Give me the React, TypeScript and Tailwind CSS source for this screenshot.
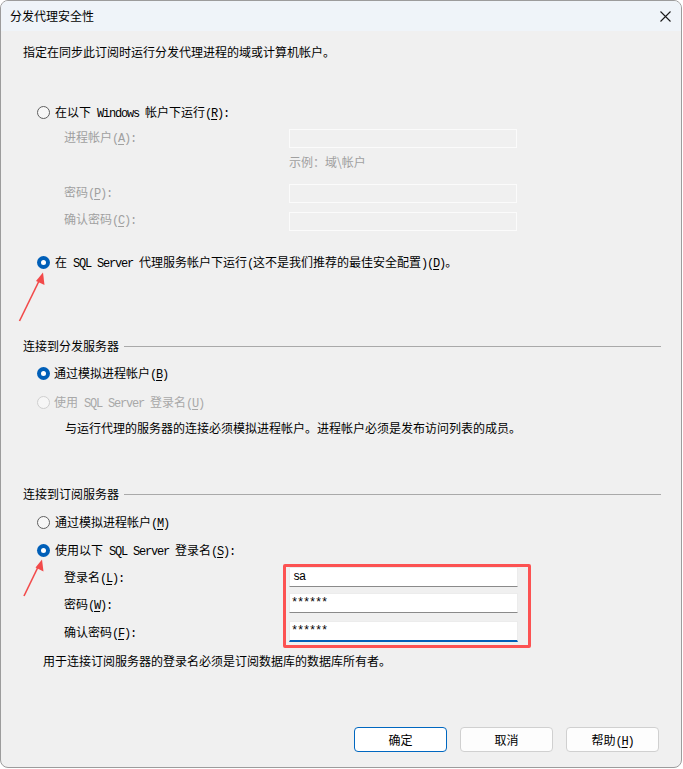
import React from "react";

const CJK = '"Noto Sans CJK SC", "Noto Sans", sans-serif';

function sim(text: string) {
  const parts = text.split(/([\x00-\x7F]+)/).filter((p) => p.length > 0);
  return parts.map((p, i) =>
    /^[\x00-\x7F]+$/.test(p) ? (
      <span
        key={i}
        className="font-['Liberation_Mono',monospace] text-[12px] tracking-[-1.2px] whitespace-pre"
      >
        {p}
      </span>
    ) : (
      <span key={i} className="font-['Noto_Sans_CJK_SC',sans-serif] text-[12px]">
        {p}
      </span>
    )
  );
}

function U({ c }: { c: string }) {
  return (
    <span className="font-['Liberation_Mono',monospace] text-[12px] tracking-[-1.2px] underline underline-offset-[2px]">
      {c}
    </span>
  );
}

function Radio({ state }: { state: "on" | "off" | "disabled" }) {
  if (state === "on")
    return (
      <span className="w-[13px] h-[13px] rounded-full bg-[#005fb8] flex items-center justify-center shrink-0">
        <span className="w-[5px] h-[5px] rounded-full bg-white" />
      </span>
    );
  if (state === "disabled")
    return <span className="w-[13px] h-[13px] rounded-full border border-[#cfcfcf] bg-[#f6f6f6] shrink-0" />;
  return <span className="w-[13px] h-[13px] rounded-full border border-[#5f5f5f] bg-[#f7f7f7] shrink-0" />;
}

function Row({ className, children }: { className: string; children: React.ReactNode }) {
  return <div className={"flex items-center h-[20px] leading-[20px] " + className}>{children}</div>;
}

export default function App() {
  return (
    <div className="w-[683px] h-[769px] bg-white relative" style={{ fontFamily: CJK }}>
      <div className="w-[682px] h-[768px] border border-[#9c9c9c] rounded-[8px] overflow-hidden bg-[#f0f0f0] flex flex-col text-black">
        {/* title bar */}
        <div className="h-[30px] bg-[#eff4f9] flex items-center justify-between pl-[9px] pr-[9px] shrink-0">
          <span className="text-[12px] leading-[20px]">分发代理安全性</span>
          <svg width="11" height="11" viewBox="0 0 11 11" className="mr-[1px]">
            <path d="M0.5 0.5 L10.5 10.5 M10.5 0.5 L0.5 10.5" stroke="#1a1a1a" strokeWidth="1.1" />
          </svg>
        </div>

        <div className="flex flex-col pl-[22px]">
          <Row className="mt-[11px] text-[12px]">指定在同步此订阅时运行分发代理进程的域或计算机帐户。</Row>

          <Row className="mt-[40px] pl-[14px] gap-[5px]">
            <Radio state="off" />
            <span className="whitespace-pre">
              {sim("在以下 Windows 帐户下运行(")}
              <U c="R" />
              {sim("):")}
            </span>
          </Row>

          {/* disabled fields */}
          <div className="mt-[3px] h-[20px] flex items-start text-[#a0a0a0]">
            <span className="w-[266px] pl-[41px] leading-[20px] whitespace-pre">
              {sim("进程帐户(")}
              <U c="A" />
              {sim("):")}
            </span>
            <span className="mt-[4px] w-[228px] h-[19px] border border-[#fbfbfb] shrink-0" />
          </div>
          <Row className="mt-[7px] pl-[266px] text-[12px] text-[#a0a0a0]">示例：域\帐户</Row>
          <div className="mt-[8px] h-[20px] flex items-start text-[#a0a0a0]">
            <span className="w-[266px] pl-[41px] leading-[20px] whitespace-pre">
              {sim("密码(")}
              <U c="P" />
              {sim("):")}
            </span>
            <span className="mt-[4px] w-[228px] h-[19px] border border-[#fbfbfb] shrink-0" />
          </div>
          <div className="mt-[7px] h-[20px] flex items-start text-[#a0a0a0]">
            <span className="w-[266px] pl-[41px] leading-[20px] whitespace-pre">
              {sim("确认密码(")}
              <U c="C" />
              {sim("):")}
            </span>
            <span className="mt-[5px] w-[228px] h-[19px] border border-[#fbfbfb] shrink-0" />
          </div>

          <Row className="mt-[25px] pl-[14px] gap-[5px]">
            <Radio state="on" />
            <span className="whitespace-pre">
              {sim("在 SQL Server 代理服务帐户下运行(这不是我们推荐的最佳安全配置)(")}
              <U c="D" />
              {sim(")。")}
            </span>
          </Row>

          {/* section 1 */}
          <div className="mt-[64px] h-[20px] flex items-center gap-[5px] pr-[20px]">
            <span className="text-[12px] leading-[20px] shrink-0">连接到分发服务器</span>
            <span className="flex-1 h-px bg-[#a9a9a9]" />
          </div>
          <Row className="mt-[7px] pl-[14px] gap-[4px]">
            <Radio state="on" />
            <span className="whitespace-pre">
              {sim("通过模拟进程帐户(")}
              <U c="B" />
              {sim(")")}
            </span>
          </Row>
          <Row className="mt-[9px] pl-[14px] gap-[4px] text-[#a8a8a8]">
            <Radio state="disabled" />
            <span className="whitespace-pre">
              {sim("使用 SQL Server 登录名(")}
              <U c="U" />
              {sim(")")}
            </span>
          </Row>
          <Row className="mt-[6px] pl-[42px] text-[12px]">与运行代理的服务器的连接必须模拟进程帐户。进程帐户必须是发布访问列表的成员。</Row>

          {/* section 2 */}
          <div className="mt-[46px] h-[20px] flex items-center gap-[5px] pr-[20px]">
            <span className="text-[12px] leading-[20px] shrink-0">连接到订阅服务器</span>
            <span className="flex-1 h-px bg-[#a9a9a9]" />
          </div>
          <Row className="mt-[8px] pl-[14px] gap-[5px]">
            <Radio state="off" />
            <span className="whitespace-pre">
              {sim("通过模拟进程帐户(")}
              <U c="M" />
              {sim(")")}
            </span>
          </Row>
          <Row className="mt-[8px] pl-[14px] gap-[5px]">
            <Radio state="on" />
            <span className="whitespace-pre">
              {sim("使用以下 SQL Server 登录名(")}
              <U c="S" />
              {sim("):")}
            </span>
          </Row>

          <div className="mt-[7px] h-[20px] flex items-center">
            <span className="w-[266px] pl-[41px] leading-[20px] whitespace-pre">
              {sim("登录名(")}
              <U c="L" />
              {sim("):")}
            </span>
            <span className="w-[229px] h-[20px] bg-white border border-[#ececec] border-b-[#8a8a8a] flex items-center pl-[3px] shrink-0">
              {sim("sa")}
            </span>
          </div>
          <div className="mt-[6px] h-[20px] flex items-center">
            <span className="w-[266px] pl-[41px] leading-[20px] whitespace-pre translate-y-[1px]">
              {sim("密码(")}
              <U c="W" />
              {sim("):")}
            </span>
            <span className="w-[229px] h-[20px] bg-white border border-[#ececec] border-b-[#8a8a8a] flex items-center pl-[1px] shrink-0">
              {sim("******")}
            </span>
          </div>
          <div className="mt-[8px] h-[21px] flex items-center">
            <span className="w-[266px] pl-[41px] leading-[20px] whitespace-pre">
              {sim("确认密码(")}
              <U c="F" />
              {sim("):")}
            </span>
            <span className="w-[229px] h-[21px] bg-white border border-[#ececec] border-b-2 border-b-[#005fb8] flex items-center pl-[1px] shrink-0">
              {sim("******")}
            </span>
          </div>

          <Row className="mt-[9px] pl-[20px] text-[12px]">用于连接订阅服务器的登录名必须是订阅数据库的数据库所有者。</Row>

          {/* buttons */}
          <div className="mt-[56px] flex gap-[13px] pl-[331px]">
            <button className="w-[93px] h-[25px] rounded-[4px] bg-white border border-[#0067c0] text-[12px] leading-[20px]">确定</button>
            <button className="w-[93px] h-[25px] rounded-[4px] bg-[#fdfdfd] border border-[#d0d0d0] text-[12px] leading-[20px]">取消</button>
            <button className="w-[93px] h-[25px] rounded-[4px] bg-[#fdfdfd] border border-[#d0d0d0] leading-[20px] whitespace-pre">
              {sim("帮助(")}
              <U c="H" />
              {sim(")")}
            </button>
          </div>
        </div>
      </div>

      {/* annotation overlays */}
      <div className="absolute left-[283px] top-[564px] w-[248px] h-[84px] border-[3px] border-[#fc5252] rounded-[2px] pointer-events-none" />
      <svg className="absolute left-0 top-0 pointer-events-none" width="683" height="769">
        <g stroke="#f24a4a" strokeWidth="1.6" fill="#f24a4a">
          <line x1="19.5" y1="321" x2="40" y2="279" />
          <polygon points="43,272.5 44.5,285 36,281" stroke="none" />
          <line x1="24" y1="596" x2="39" y2="565" />
          <polygon points="42,559.5 43.5,571.5 35.5,567.5" stroke="none" />
        </g>
      </svg>
    </div>
  );
}
